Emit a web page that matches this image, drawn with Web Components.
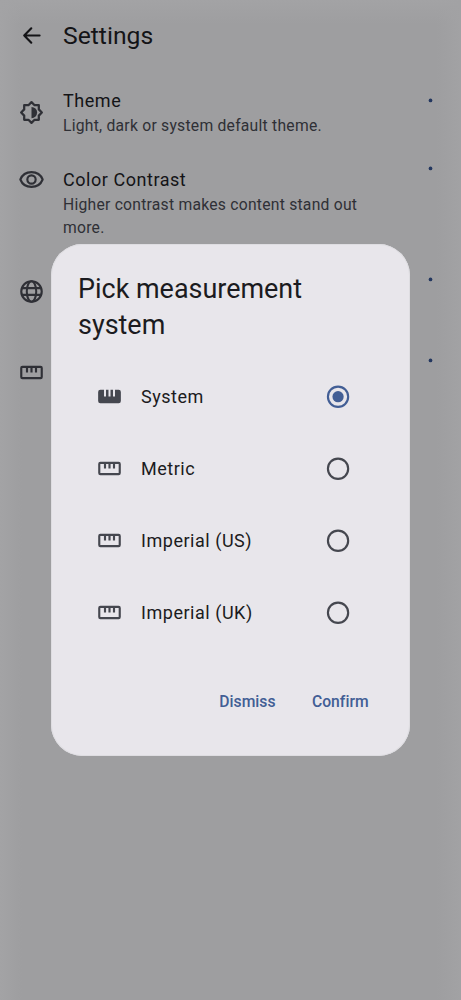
<!DOCTYPE html>
<html lang="en">
<head>
<meta charset="utf-8">
<meta name="viewport" content="width=device-width">
<title>Settings</title>
<style>
html,body{margin:0;height:100%;overflow:hidden;font-family:Roboto,"Liberation Sans",sans-serif;background:#9e9ea0}
</style>
</head>
<body>
<settings-screen></settings-screen>
<script>
const ICONS = {
  back: '<path d="M11.800 5.600 5.500 12l6.300 6.400M5.500 12H19.200" stroke-width="1.900" stroke-linecap="round" stroke-linejoin="round"/>',
  theme: '<path d="M12 2.800 14.750 5.500H18.500V9.250L21.200 12 18.500 14.750V18.500H14.750L12 21.200 9.250 18.500H5.500V14.750L2.800 12 5.500 9.250V5.500H9.250Z" stroke-width="2" stroke-linejoin="round"/><path d="M12 7a5 5 0 0 1 0 10z" fill="currentColor" stroke="none"/>',
  eye: '<path d="M12 5.400C7.500 5.400 3.700 7.900 2.100 12 3.700 16.100 7.500 18.600 12 18.600s8.300-2.500 9.900-6.600C20.300 7.900 16.500 5.400 12 5.400Z" stroke-width="1.900" stroke-linejoin="round"/><circle cx="12" cy="12" r="3.700" stroke-width="1.900"/>',
  globe: '<circle cx="12" cy="12" r="9.100" stroke-width="1.900"/><ellipse cx="12" cy="12" rx="4.200" ry="9.100" stroke-width="1.800"/><path d="M3.400 9H20.600M3.400 15H20.600" stroke-width="1.900"/>',
  ruler: '<rect x="2.900" y="7" width="18.200" height="10" rx="1" stroke-width="1.900"/><path d="M8 7v5M12 7v5M16 7v5" stroke-width="1.900"/>',
  rulerFilled: '<path d="M3.900 6H7.100V12H8.900V6H11.100V12H12.900V6H15.100V12H16.900V6H20.100a2 2 0 0 1 2 2v8a2 2 0 0 1-2 2H3.900a2 2 0 0 1-2-2V8a2 2 0 0 1 2-2Z" fill="currentColor" stroke="none"/>'
};
function define(name, css, html) {
  customElements.define(name, class extends HTMLElement {
    constructor() {
      super();
      this.attachShadow({mode: 'open'}).innerHTML = `<style>${css}</style>${html}`;
    }
  });
}
customElements.define('m-icon', class extends HTMLElement {
  connectedCallback() {
    if (this.shadowRoot) return;
    this.attachShadow({mode: 'open'}).innerHTML = `<style>:host{display:block;flex:none;width:27px;height:27px}svg{display:block;width:100%;height:100%}</style>
      <svg viewBox="0 0 24 24" fill="none" stroke="currentColor">${ICONS[this.getAttribute('name')]}</svg>`;
  }
});
define('app-bar', `
  :host{display:flex;align-items:center;height:71.8px;box-sizing:border-box;padding-left:18px;gap:18px;color:#141417}`,
  '<style>.t{font-size:24.7px;line-height:31.4px}</style><m-icon name="back"></m-icon><div class="t"><slot></slot></div>');
define('settings-item', `
  :host{display:flex;box-sizing:border-box;height:80.8px;padding:0 28px 0 18px;align-items:center;color:#2f3036}
  :host([lines="3"]){height:98.700px;padding-top:13.400px;align-items:flex-start}
  .text{flex:1;padding:.5px 55px 0 18px}
  :host([lines="3"]) .text{padding-top:.900px}
  .dot{display:block;flex:none;align-self:flex-start;width:5px;height:5px;margin-top:26px}
  :host([lines="3"]) .dot{margin-top:0}`,
  '<slot name="icon"></slot><div class="text"><slot name="title"></slot><slot name="sub"></slot></div><svg class="dot" viewBox="0 0 5 5"><circle cx="2.500" cy="2.400" r="1.850" fill="#23375f"/></svg>');
define('item-title', ':host{display:block;font-size:18px;line-height:26.900px;letter-spacing:.540px;color:#141417}', '<slot></slot>');
define('item-sub', ':host{display:block;margin-top:.5px;font-size:15.700px;line-height:22.400px;letter-spacing:.240px;color:#2f3036}', '<slot></slot>');
define('radio-mark', `
  :host{display:grid;place-items:center;flex:none;width:54px;height:54px;color:#45474f}
  :host([checked]){color:#425e95}
  svg{width:27px;height:27px;display:block}
  .in{display:none}:host([checked]) .in{display:block}`,
  '<svg viewBox="0 0 24 24"><circle cx="11.600" cy="12.200" r="9" fill="none" stroke="currentColor" stroke-width="1.900"/><circle class="in" cx="11.600" cy="12.200" r="5" fill="currentColor"/></svg>');
define('option-row', `
  :host{display:flex;align-items:center;height:71.850px;box-sizing:border-box;padding:0 18px;color:#45474f}
  .t{flex:1;padding:1.500px 0 0 18px;font-size:18px;line-height:26.900px;letter-spacing:.530px;color:#1b1b20}`,
  '<slot name="icon"></slot><div class="t"><slot></slot></div><slot name="radio"></slot>');
define('text-button', ':host{display:flex;align-items:center;height:54px;padding:0 14px 0 13.400px;font-size:15.700px;font-weight:500;letter-spacing:.020px;color:#425e95}', '<slot></slot>');
define('pick-dialog', `
  :host{display:block;box-sizing:border-box;width:359px;height:512px;padding:28px 27px 26px;border-radius:31.400px;background:#e8e6eb;box-shadow:inset 0 0 0 1px #dedde1}
  .title{font-size:26.950px;line-height:35.900px;color:#1b1b20;padding-bottom:17px}
  .actions{display:flex;justify-content:flex-end;gap:9px;padding:26px .300px 0 0}`,
  '<div class="title"><slot name="title"></slot></div><slot></slot><div class="actions"><slot name="action"></slot></div>');
define('settings-list', ':host{display:block}', `
  <settings-item><m-icon slot="icon" name="theme"></m-icon><item-title slot="title">Theme</item-title><item-sub slot="sub">Light, dark or system default theme.</item-sub></settings-item>
  <settings-item lines="3"><m-icon slot="icon" name="eye"></m-icon><item-title slot="title">Color Contrast</item-title><item-sub slot="sub">Higher contrast makes content stand out more.</item-sub></settings-item>
  <settings-item><m-icon slot="icon" name="globe"></m-icon></settings-item>
  <settings-item><m-icon slot="icon" name="ruler"></m-icon></settings-item>`);
define('settings-screen', `
  :host{display:block;position:relative;width:461px;height:1000px;overflow:hidden;background:linear-gradient(90deg,#a3a3a5,#9e9ea000 22px,#9e9ea000 436px,#a2a2a4),linear-gradient(#a3a3a5,#9e9ea0 24px)}
  .overlay{position:absolute;inset:0;display:grid;place-items:center}`,
  `<app-bar>Settings</app-bar>
  <settings-list></settings-list>
  <div class="overlay"><pick-dialog>
    <span slot="title">Pick measurement system</span>
    <option-row><m-icon slot="icon" name="rulerFilled"></m-icon>System<radio-mark slot="radio" checked></radio-mark></option-row>
    <option-row><m-icon slot="icon" name="ruler"></m-icon>Metric<radio-mark slot="radio"></radio-mark></option-row>
    <option-row><m-icon slot="icon" name="ruler"></m-icon>Imperial (US)<radio-mark slot="radio"></radio-mark></option-row>
    <option-row><m-icon slot="icon" name="ruler"></m-icon>Imperial (UK)<radio-mark slot="radio"></radio-mark></option-row>
    <text-button slot="action">Dismiss</text-button>
    <text-button slot="action">Confirm</text-button>
  </pick-dialog></div>`);
</script>
</body>
</html>
